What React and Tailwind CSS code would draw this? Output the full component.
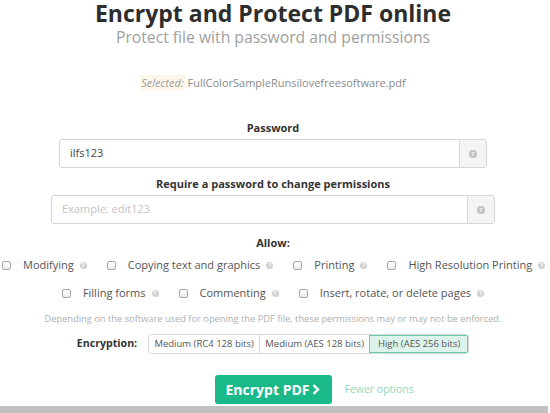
import React from 'react';

const FONT = { fontFamily: '"Open Sans", "DejaVu Sans", sans-serif' };

function Help({ size = 'w-[7px] h-[7px]', color = 'bg-[#d0d0d0]' }) {
  return (
    <span className={`inline-flex items-center justify-center rounded-full ${size} ${color} text-white text-[6px] font-bold leading-none`}>?</span>
  );
}

function Check({ label }) {
  return (
    <label className="flex items-center whitespace-nowrap leading-[14px]">
      <span className="w-[9px] h-[9px] rounded-[2px] border border-[#a8a8a8] bg-gradient-to-b from-white to-[#ececec]" />
      <span className="ml-[12px] text-[11px] text-[#555]">{label}</span>
      <span className="ml-[6px] flex"><Help /></span>
    </label>
  );
}

function Field({ width, value, placeholder }) {
  return (
    <div className={`flex h-[29px] ${width} border border-[#d4d4d4] rounded-[3px] overflow-hidden`}>
      <div className={`flex-1 flex items-center px-[10px] text-[11px] ${value ? 'text-[#444]' : 'text-[#c4c4c4]'}`}>
        {value || placeholder}
      </div>
      <div className="w-[27px] flex items-center justify-center border-l border-[#d9d9d9] bg-[#f4f4f4]">
        <Help size="w-[8px] h-[8px]" color="bg-[#c2c2c2]" />
      </div>
    </div>
  );
}

const ROW1 = ['Modifying', 'Copying text and graphics', 'Printing', 'High Resolution Printing'];
const ROW2 = ['Filling forms', 'Commenting', 'Insert, rotate, or delete pages'];
const LEVELS = ['Medium (RC4 128 bits)', 'Medium (AES 128 bits)', 'High (AES 256 bits)'];

export default function App() {
  return (
    <div className="w-[550px] h-[413px] bg-white overflow-hidden flex flex-col items-center pr-[4px]" style={FONT}>
      <h1 className="mt-[3px] text-[23px] font-bold text-[#2d2d2d] leading-[20px] whitespace-nowrap">Encrypt and Protect PDF online</h1>
      <p className="mt-[4px] text-[15.7px] text-[#a0a0a0] leading-[20px]">Protect file with password and permissions</p>

      <p className="mt-[29px] text-[11px] leading-[14px] text-[#8a8a8a]">
        <span className="italic text-[#a0a0a0] bg-[#fdf7ea] px-[1px]">Selected:</span> FullColorSampleRunsilovefreesoftware.pdf
      </p>

      <p className="mt-[31px] text-[11px] font-bold text-[#333] leading-[14px]">Password</p>
      <div className="mt-[4px]"><Field width="w-[428px]" value="ilfs123" /></div>

      <p className="mt-[9px] text-[11px] font-bold text-[#333] leading-[14px]">Require a password to change permissions</p>
      <div className="mt-[4px]"><Field width="w-[444px]" placeholder="Example: edit123" /></div>

      <p className="mt-[12px] text-[11px] font-bold text-[#333] leading-[14px]">Allow:</p>
      <div className="mt-[8px] self-start ml-[2px] flex gap-[20px] whitespace-nowrap">
        {ROW1.map(l => <Check key={l} label={l} />)}
      </div>
      <div className="mt-[14px] flex gap-[20px]">
        {ROW2.map(l => <Check key={l} label={l} />)}
      </div>

      <p className="mt-[13px] text-[9.3px] text-[#b0b0b0] leading-[12px] whitespace-nowrap">Depending on the software used for opening the PDF file, these permissions may or may not be enforced.</p>

      <div className="mt-[9px] h-[20px] flex items-center">
        <span className="text-[10.6px] font-bold text-[#333] mr-[11px]">Encryption:</span>
        <div className="flex h-[20px] rounded-[3px] overflow-hidden border border-[#d8d8d8]">
          {LEVELS.map((l, i) => (
            <div key={l} className={`flex items-center justify-center text-[9.5px] text-[#555] ${i === 2 ? 'w-[99px]' : 'w-[110px]'} ${i > 0 ? 'border-l border-[#d8d8d8]' : ''} ${i === 2 ? 'bg-[#ddf4ec] outline outline-1 outline-[#62cfa8] -outline-offset-1' : ''}`}>{l}</div>
          ))}
        </div>
      </div>

      <div className="mt-[21px] flex items-center relative">
        <button className="h-[29px] w-[117px] rounded-[3px] bg-[#1ab98a] text-white text-[14px] font-bold flex items-center justify-center gap-[3px]">
          Encrypt PDF
          <svg width="8" height="11" viewBox="0 0 8 11"><path d="M1.5 1.2 L6 5.5 L1.5 9.8" stroke="white" strokeWidth="2.4" fill="none" /></svg>
        </button>
        <span className="absolute left-[130px] whitespace-nowrap text-[10.5px] text-[#8fd9bd]">Fewer options</span>
      </div>

      <div className="mt-[2px] w-[550px] flex-1 bg-[#c1c1c1]" />
    </div>
  );
}
